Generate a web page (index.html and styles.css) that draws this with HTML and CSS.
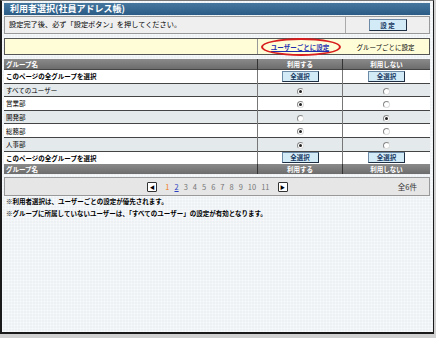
FILE: index.html
```html
<!DOCTYPE html>
<html>
  <head>
    <meta charset="utf-8">
    <link rel="stylesheet" href="styles.css">
  </head>
  <body>
    <div class="frame">
      <div class="title">利用者選択(社員アドレス帳)</div>

      <div class="notice">
        <div class="notice-text">設定完了後、必ず「設定ボタン」を押してください。</div>
        <div class="notice-btn"><span class="btn btn-set">設 定</span></div>
      </div>

      <div class="mode">
        <div class="mode-blank"></div>
        <div class="mode-user">
          <a class="mode-link">ユーザーごとに設定</a>
          <span class="circle"></span>
        </div>
        <div class="mode-group">グループごとに設定</div>
      </div>

      <table class="groups">
        <tr class="head">
          <td class="c-name">グループ名</td>
          <td class="c-use">利用する</td>
          <td class="c-nouse">利用しない</td>
        </tr>
        <tr class="bulk">
          <td class="c-name">このページの全グループを選択</td>
          <td class="c-use"><span class="btn">全選択</span></td>
          <td class="c-nouse"><span class="btn">全選択</span></td>
        </tr>
        <tr class="alt">
          <td class="c-name">すべてのユーザー</td>
          <td class="c-use"><span class="radio on"></span></td>
          <td class="c-nouse"><span class="radio"></span></td>
        </tr>
        <tr>
          <td class="c-name">営業部</td>
          <td class="c-use"><span class="radio on"></span></td>
          <td class="c-nouse"><span class="radio"></span></td>
        </tr>
        <tr class="alt">
          <td class="c-name">開発部</td>
          <td class="c-use"><span class="radio"></span></td>
          <td class="c-nouse"><span class="radio on"></span></td>
        </tr>
        <tr>
          <td class="c-name">総務部</td>
          <td class="c-use"><span class="radio on"></span></td>
          <td class="c-nouse"><span class="radio"></span></td>
        </tr>
        <tr class="alt">
          <td class="c-name">人事部</td>
          <td class="c-use"><span class="radio on"></span></td>
          <td class="c-nouse"><span class="radio"></span></td>
        </tr>
        <tr class="bulk">
          <td class="c-name">このページの全グループを選択</td>
          <td class="c-use"><span class="btn">全選択</span></td>
          <td class="c-nouse"><span class="btn">全選択</span></td>
        </tr>
        <tr class="head">
          <td class="c-name">グループ名</td>
          <td class="c-use">利用する</td>
          <td class="c-nouse">利用しない</td>
        </tr>
      </table>

      <div class="pager">
        <div class="pages">
          <span class="arrow">&#9664;</span>
          <span class="pg current">1</span>
          <a class="pg link">2</a>
          <span class="pg">3</span>
          <span class="pg">4</span>
          <span class="pg">5</span>
          <span class="pg">6</span>
          <span class="pg">7</span>
          <span class="pg">8</span>
          <span class="pg">9</span>
          <span class="pg">10</span>
          <span class="pg">11</span>
          <span class="arrow">&#9654;</span>
        </div>
        <div class="total">全6件</div>
      </div>

      <div class="notes">
        <p>※利用者選択は、ユーザーごとの設定が優先されます。</p>
        <p>※グループに所属していないユーザーは、「すべてのユーザー」の設定が有効となります。</p>
      </div>
    </div>
  </body>
</html>
```

FILE: styles.css
```css
body {
  margin: 0;
  background: #d0d0d0;
  font-family: "Noto Sans CJK JP", "Noto Sans", sans-serif;
  font-size: 6.5px;
  color: #000;
}

.frame {
  box-sizing: border-box;
  width: 434px;
  height: 334px;
  border: 2px solid #1a1a1a;
  border-top: 1px solid #777;
  border-right-width: 1px;
  background-color: #edf1f4;
  background-image:
    linear-gradient(90deg, rgba(255,255,255,0.35) 1px, transparent 1px),
    linear-gradient(rgba(255,255,255,0.35) 1px, transparent 1px);
  background-size: 3px 3px;
  padding: 2px 3px 0 2px;
}

.title {
  height: 12px;
  line-height: 12px;
  padding-left: 6px;
  background: linear-gradient(#44769e, #2a5c86);
  color: #fff;
  font-weight: bold;
  font-size: 9px;
}

.notice {
  display: flex;
  height: 16px;
  margin-top: 1px;
  background: #efefef;
  border: 1px solid #999;
}

.notice-text {
  flex: 1;
  line-height: 14px;
  padding-left: 4px;
  font-size: 7.2px;
}

.notice-btn {
  width: 83px;
  border-left: 1px solid #aaa;
  display: flex;
  align-items: center;
  justify-content: center;
}

.btn {
  display: inline-block;
  width: 35px;
  height: 9px;
  line-height: 9px;
  text-align: center;
  background: #d3ebf7;
  border: 1px solid #6c8aa6;
  border-right-color: #1e2f44;
  border-bottom-color: #1e2f44;
  color: #16365e;
  font-weight: bold;
}

.btn-set {
  width: 36px;
  height: 10px;
  line-height: 10px;
}

.mode {
  display: flex;
  height: 15px;
  margin-top: 4px;
  background: #fffdd8;
  border: 1px solid #555;
}

.mode-blank {
  flex: 1;
  border-right: 1px solid #999;
}

.mode-user {
  position: relative;
  width: 84px;
  display: flex;
  align-items: center;
  justify-content: center;
}

.mode-link {
  color: #1f2fb0;
  text-decoration: underline;
  font-weight: bold;
}

.circle {
  position: absolute;
  left: 3px;
  top: -1px;
  width: 76px;
  height: 14px;
  border: 2px solid #d71d1d;
  border-radius: 50%;
}

.mode-group {
  width: 87px;
  display: flex;
  align-items: center;
  justify-content: center;
}

.groups {
  width: 100%;
  margin-top: 4px;
  border-collapse: collapse;
  background: #fff;
}

.groups td {
  padding: 0 2px;
  height: 12.6px;
  border-top: 1px solid #444;
}

.groups .c-use,
.groups .c-nouse {
  text-align: center;
  border-left: 1px solid #777;
}

.groups .c-use {
  width: 80px;
}

.groups .c-nouse {
  width: 83px;
}

.groups .head td {
  height: 10px;
  line-height: 10px;
  background: linear-gradient(#8a8a8a, #6c6c6c);
  color: #fff;
  font-weight: bold;
  border-top: none;
}

.groups .head .c-use,
.groups .head .c-nouse {
  border-left: 1px solid #333;
}

.groups .bulk td {
  font-weight: bold;
}

.groups .alt td {
  background: #e4e9ec;
}

.radio {
  display: inline-flex;
  align-items: center;
  justify-content: center;
  box-sizing: border-box;
  width: 7px;
  height: 7px;
  border: 1px solid #888;
  border-right-color: #ddd;
  border-bottom-color: #ddd;
  border-radius: 50%;
  background: #fff;
  vertical-align: middle;
}

.radio.on::after {
  content: "";
  width: 3px;
  height: 3px;
  border-radius: 50%;
  background: #222;
}

.pager {
  display: flex;
  align-items: center;
  height: 17px;
  margin-top: 3px;
  background: #e6e6e6;
  border: 1px solid #999;
}

.pages {
  flex: 1;
  display: flex;
  align-items: center;
  justify-content: center;
  padding-left: 72px;
  gap: 5px;
}

.arrow {
  display: inline-block;
  box-sizing: border-box;
  width: 10px;
  height: 10px;
  line-height: 8px;
  text-align: center;
  font-size: 5px;
  background: #fff;
  border: 1px solid #333;
  border-radius: 1px;
}

.pg {
  color: #777;
  font-size: 7.5px;
}

.pg.current {
  color: #f07a10;
  margin-left: 3px;
}

.pg.link {
  color: #2a3ec0;
  text-decoration: underline;
}

.pg + .arrow {
  margin-left: 3px;
}

.total {
  padding: 0 12px 0 40px;
  font-size: 7.5px;
  color: #333;
}

.notes {
  margin-top: 0;
  padding-left: 2px;
  font-weight: bold;
}

.notes p {
  margin: 0;
  line-height: 11.5px;
}
```
